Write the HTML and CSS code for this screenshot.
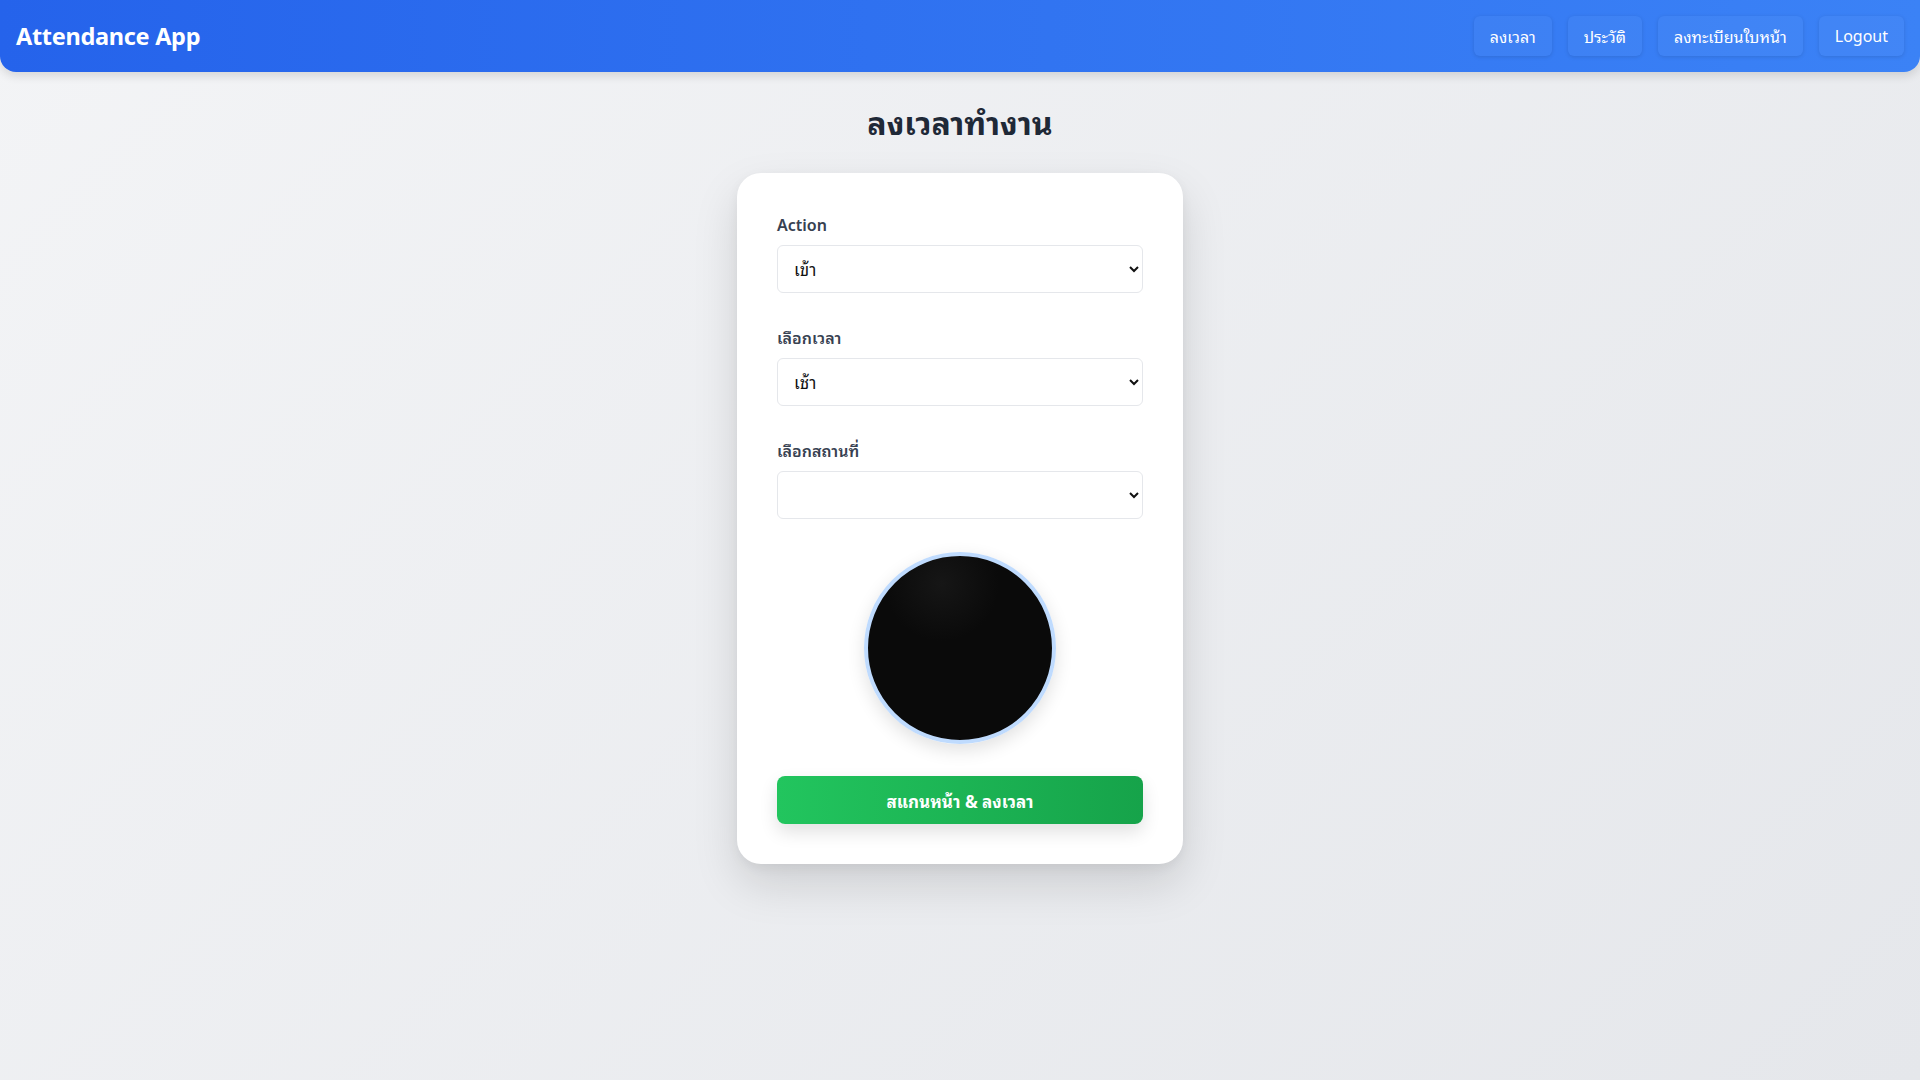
FILE: index.html
```html
<!DOCTYPE html>
<html lang="th">
<head>
<meta charset="utf-8">
<title>Attendance App</title>
<link rel="stylesheet" href="styles.css">
</head>
<body>
<nav class="navbar">
  <div class="brand">Attendance App</div>
  <div class="nav-links">
    <button class="nav-btn">ลงเวลา</button>
    <button class="nav-btn">ประวัติ</button>
    <button class="nav-btn">ลงทะเบียนใบหน้า</button>
    <button class="nav-btn">Logout</button>
  </div>
</nav>
<main class="main">
  <h1 class="page-title">ลงเวลาทำงาน</h1>
  <div class="card">
    <div class="field">
      <label class="label">Action</label>
      <select class="select">
        <option>เข้า</option>
        <option>ออก</option>
      </select>
    </div>
    <div class="field">
      <label class="label">เลือกเวลา</label>
      <select class="select">
        <option>เช้า</option>
        <option>บ่าย</option>
      </select>
    </div>
    <div class="field">
      <label class="label">เลือกสถานที่</label>
      <select class="select">
        <option></option>
      </select>
    </div>
    <div class="camera-wrap">
      <div class="camera"></div>
    </div>
    <button class="scan-btn">สแกนหน้า &amp; ลงเวลา</button>
  </div>
</main>
</body>
</html>
```
FILE: styles.css
```css
* { box-sizing: border-box; }
html, body { height: 100%; }
body {
  margin: 0;
  font-family: "Noto Sans", "Noto Sans Thai Looped", "Leelawadee UI", "Loma", "Garuda", "Tlwg Typo", "Norasi", "Noto Sans Thai", "Open Sans", sans-serif;
  background: linear-gradient(135deg, #f3f4f6 0%, #e5e7eb 100%);
  color: #1f2937;
  min-height: 1080px;
}
.navbar {
  height: 72px;
  display: flex;
  align-items: center;
  justify-content: space-between;
  padding: 0 16px;
  background: linear-gradient(90deg, #2563eb 0%, #3b82f6 100%);
  border-radius: 0 0 16px 16px;
  box-shadow: 0 4px 10px rgba(0,0,0,0.12);
}
.brand {
  color: #fff;
  font-size: 23.5px;
  font-weight: 700;
  letter-spacing: -0.3px;
}
.nav-links { display: flex; gap: 16px; }
.nav-btn {
  height: 40px;
  padding: 0 16px;
  border: none;
  border-radius: 6px;
  background: rgba(255,255,255,0.04);
  box-shadow: 0 1px 4px rgba(0,0,0,0.12);
  color: #fff;
  font-family: inherit;
  font-size: 16px;
}
.main {
  display: flex;
  flex-direction: column;
  align-items: center;
}
.page-title {
  margin: 33px 0 32px;
  font-size: 32px;
  font-weight: 700;
  line-height: 36px;
  color: #1f2937;
}
.card {
  width: 446px;
  background: #fff;
  border-radius: 24px;
  padding: 40px;
  box-shadow: 0 20px 45px rgba(0,0,0,0.13), 0 4px 12px rgba(0,0,0,0.05);
  display: flex;
  flex-direction: column;
}
.field { display: flex; flex-direction: column; margin-bottom: 33px; }
.label {
  font-size: 16px;
  font-weight: 600;
  line-height: 24px;
  color: #374151;
  margin-bottom: 8px;
}
.select {
  height: 48px;
  width: 100%;
  border: 1px solid #e5e7eb;
  border-radius: 6px;
  background: #fff;
  padding: 0 12px;
  font-family: inherit;
  font-size: 17px;
  color: #111;
}
.camera-wrap {
  display: flex;
  justify-content: center;
  margin-bottom: 32px;
}
.camera {
  width: 192px;
  height: 192px;
  border-radius: 50%;
  border: 4px solid #bfdbfe;
  background: radial-gradient(circle at 40% 15%, #161616 0%, #0a0a0a 30%, #0a0a0a 100%);
  box-shadow: 0 6px 18px rgba(0,0,0,0.12);
}
.scan-btn {
  height: 48px;
  width: 100%;
  border: none;
  border-radius: 8px;
  background: linear-gradient(90deg, #22c55e 0%, #16a34a 100%);
  color: #fff;
  font-family: inherit;
  font-size: 17px;
  font-weight: 700;
  box-shadow: 0 8px 18px rgba(0,0,0,0.12);
}
```
